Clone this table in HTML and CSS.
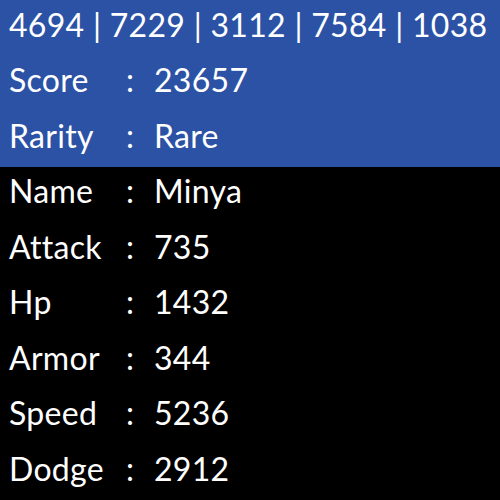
FILE: index.html
```html
<!DOCTYPE html>
<html lang="en">
<head>
	<meta charset="UTF-8">
	<title>Hero</title>
	<link rel="stylesheet" href="styles.css">
</head>
<body>

<div class="card">
	<div class="top">
		<div class="row ids">4694 | 7229 | 3112 | 7584 | 1038</div>
		<div class="row"><span class="key">Score</span><span class="sep">:</span><span class="val">23657</span></div>
		<div class="row"><span class="key">Rarity</span><span class="sep">:</span><span class="val">Rare</span></div>
	</div>
	<div class="stats">
		<div class="row"><span class="key">Name</span><span class="sep">:</span><span class="val">Minya</span></div>
		<div class="row"><span class="key">Attack</span><span class="sep">:</span><span class="val">735</span></div>
		<div class="row"><span class="key">Hp</span><span class="sep">:</span><span class="val">1432</span></div>
		<div class="row"><span class="key">Armor</span><span class="sep">:</span><span class="val">344</span></div>
		<div class="row"><span class="key">Speed</span><span class="sep">:</span><span class="val">5236</span></div>
		<div class="row"><span class="key">Dodge</span><span class="sep">:</span><span class="val">2912</span></div>
	</div>
</div>

</body>
</html>
```

FILE: styles.css
```css
html, body {
	width: 100%;
	height: 100%;
	margin: 0;
	background: #000;
	color: #fff;
	font-family: "Lato", "Open Sans", sans-serif;
	font-size: 32px;
}

.card {
	height: 500px;
	display: flex;
	flex-direction: column;
}

.top {
	background: #2b52a5;
}

.row {
	height: 55.5px;
	display: flex;
	align-items: center;
	padding-left: 9px;
	padding-bottom: 7px;
	box-sizing: border-box;
	white-space: nowrap;
	letter-spacing: 0.3px;
}

.key {
	width: 117px;
}

.sep {
	width: 28px;
}
```
